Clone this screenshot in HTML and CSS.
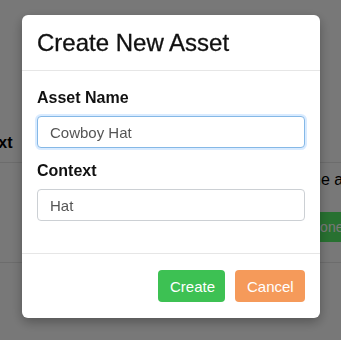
FILE: index.html
```html
<!DOCTYPE html>
<html lang="en">

<head>
    <meta charset="UTF-8">
    <title>Create New Asset</title>
    <link rel="stylesheet" href="styles.css">
</head>

<body>
    <div class="page">
        <div class="table-head">
            <div class="head-cell">Context</div>
        </div>
        <div class="table-row">
            <p class="row-text">Some are fine</p>
            <button class="btn-done">Done</button>
        </div>
    </div>

    <div class="backdrop"></div>

    <div class="modal">
        <div class="modal-header">
            <h2>Create New Asset</h2>
        </div>
        <div class="modal-body">
            <div class="form-group">
                <label for="assetName">Asset Name</label>
                <input type="text" id="assetName" class="focused" value="Cowboy Hat">
            </div>
            <div class="form-group">
                <label for="assetContext">Context</label>
                <input type="text" id="assetContext" value="Hat">
            </div>
        </div>
        <div class="modal-footer">
            <button class="btn btn-create">Create</button>
            <button class="btn btn-cancel">Cancel</button>
        </div>
    </div>
</body>

</html>
```

FILE: styles.css
```css
body {
    font-family: "Liberation Sans", Arial, sans-serif;
    margin: 0;
    width: 341px;
    height: 340px;
    overflow: hidden;
    background-color: #fff;
}

.page {
    padding-top: 124px;
}

.table-head {
    height: 38px;
    border-bottom: 1px solid #e6e6e6;
    display: flex;
}

.head-cell {
    margin-left: -47px;
    font-weight: bold;
    font-size: 16px;
    line-height: 38px;
}

.table-row {
    box-sizing: border-box;
    height: 100px;
    border-bottom: 1px solid #e6e6e6;
    padding: 7px 0 0 288px;
    white-space: nowrap;
    display: flex;
    flex-direction: column;
    align-items: flex-start;
}

.row-text {
    margin: 0;
    font-size: 16px;
    line-height: 20px;
}

.btn-done {
    margin: 22px 0 0 14px;
    height: 30px;
    padding: 0 8px;
    border: none;
    background-color: #56f068;
    color: #fff;
    font-family: inherit;
    font-size: 14px;
}

.backdrop {
    position: fixed;
    inset: 0;
    background-color: rgba(0, 0, 0, 0.53);
}

.modal {
    position: fixed;
    left: 22px;
    top: 15px;
    width: 298px;
    height: 303px;
    background-color: #fff;
    border-radius: 6px;
    box-shadow: 0 4px 12px rgba(0, 0, 0, 0.3);
    display: flex;
    flex-direction: column;
}

.modal-header {
    height: 55px;
    padding: 0 15px;
    border-bottom: 1px solid #e6e6e6;
    display: flex;
    align-items: center;
}

.modal-header h2 {
    margin: 0;
    font-size: 24px;
    font-weight: normal;
    color: #111;
    -webkit-text-stroke: 0.3px #111;
}

.modal-body {
    padding: 16px 15px 0 15px;
    flex: 1;
}

.form-group {
    margin-bottom: 12px;
}

.form-group label {
    display: block;
    font-size: 16px;
    font-weight: bold;
    line-height: 22px;
    margin-bottom: 7px;
    color: #111;
}

.form-group input {
    box-sizing: border-box;
    width: 100%;
    height: 32px;
    padding: 0 12px;
    border: 1px solid #ccd0d4;
    border-radius: 4px;
    font-family: inherit;
    font-size: 15px;
    color: #555;
    outline: none;
}

.form-group input.focused {
    border-color: #85b8e6;
    box-shadow: 0 0 0 2px rgba(0, 123, 255, 0.15);
}

.modal-footer {
    border-top: 1px solid #e6e6e6;
    padding: 16px 15px;
    display: flex;
    justify-content: flex-end;
    gap: 10px;
}

.btn {
    height: 32px;
    padding: 0 12px;
    border: none;
    border-radius: 4px;
    color: #fff;
    font-family: inherit;
    font-size: 15px;
}

.btn-create {
    background-color: #3dc153;
    width: 67px;
}

.btn-cancel {
    background-color: #f59a5a;
    width: 70px;
}
```
